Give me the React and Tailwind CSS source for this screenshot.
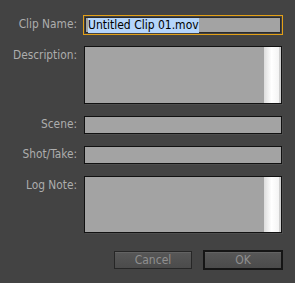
import React from "react";

const font = { fontFamily: '"DejaVu Sans Condensed", "DejaVu Sans", sans-serif' };

const Label = ({ children, top }) => (
  <div
    className={`w-[77px] shrink-0 text-right text-[11.8px] text-[#adadad] ${top ? "pt-[1px]" : "self-center"}`}
  >
    {children}
  </div>
);

const Field = ({ h }) => (
  <div className={`ml-[7px] w-[198px] ${h} border border-[#111] bg-[#a3a3a3] shadow-[1px_1px_0_#4d4d4d]`} />
);

const Area = ({ h }) => (
  <div className={`ml-[7px] w-[198px] ${h} flex border border-[#111] bg-[#a3a3a3] shadow-[1px_1px_0_#4d4d4d]`}>
    <div className="flex-1" />
    <div className="w-[15px] h-full bg-gradient-to-r from-[#dcdcdc] via-white to-[#f4f4f4]" />
    <div className="w-[2px] h-full bg-[#cfcfcf]" />
  </div>
);

export default function App() {
  return (
    <div className="w-[295px] h-[283px] bg-[#434343] pt-[15px] flex flex-col" style={font}>
      {/* clip name */}
      <div className="flex">
        <Label>Clip Name:</Label>
        <div className="ml-[6px] w-[200px] h-[20px] border border-[#e3a016] p-px">
          <div className="w-full h-full border border-[#2a2a2a] bg-[#a3a3a3] flex items-center pl-[2px]">
            <span className="bg-[#b5d5fb] text-[12px] leading-[15px] text-black">Untitled Clip 01.mov</span>
          </div>
        </div>
      </div>

      <div className="flex mt-[11px]">
        <Label top>Description:</Label>
        <Area h="h-[58px]" />
      </div>

      <div className="flex mt-[12px]">
        <Label>Scene:</Label>
        <Field h="h-[18px]" />
      </div>

      <div className="flex mt-[12px]">
        <Label>Shot/Take:</Label>
        <Field h="h-[18px]" />
      </div>

      <div className="flex mt-[12px]">
        <Label top>Log Note:</Label>
        <Area h="h-[57px]" />
      </div>

      {/* buttons */}
      <div className="flex justify-end mt-[17px] pr-[12px] gap-[11px] items-center">
        <button className="w-[78px] h-[18px] border border-[#262626] bg-gradient-to-b from-[#575757] to-[#4b4b4b] text-[12px] leading-none text-[#8f8f8f] shadow-[inset_0_1px_0_#636363]">
          Cancel
        </button>
        <button className="w-[80px] h-[20px] border-2 border-[#151515] bg-gradient-to-b from-[#575757] to-[#4b4b4b] text-[12px] leading-none text-[#8f8f8f] shadow-[inset_0_1px_0_#636363]">
          OK
        </button>
      </div>
    </div>
  );
}
